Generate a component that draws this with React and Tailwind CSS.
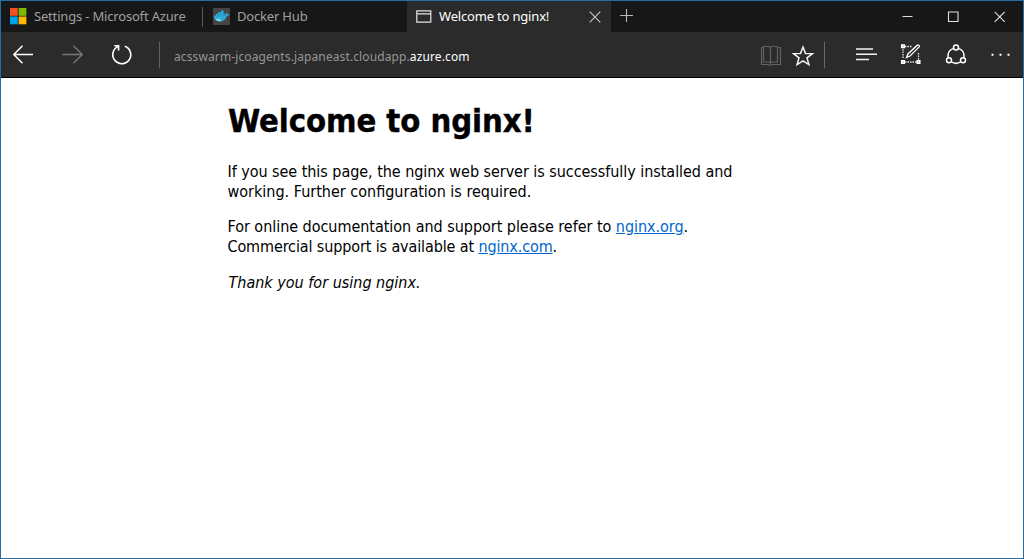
import React from "react";

function WindowsLogo() {
  return (
    <svg width="17" height="17" viewBox="0 0 17 17" className="shrink-0">
      <path fill="#f35022" d="M0 0h7.8v7.8H0z" />
      <path fill="#7eb900" d="M8.6 0h7.8v7.8H8.6z" />
      <path fill="#00a3ee" d="M0 8.5h7.8v7.8H0z" />
      <path fill="#ffb800" d="M8.6 8.5h7.8v7.8H8.6z" />
    </svg>
  );
}

function DockerLogo() {
  return (
    <svg width="17" height="17" viewBox="0 0 17 17" className="shrink-0">
      <path fill="#454545" d="M0 0h17v17H0z" />
      <path fill="#2ba9d8" d="M1 7.5h2V5.800h2V4.200h3V2.500h2.600v3.300h1.200v1.700c1-.1 1.200-.5.9-1.700-.1-.8.2-1.200.6-1.300.7.4 1 .9 1.100 1.500.7-.2 1.300 0 1.800.4-.4 1-1.300 1.400-2.300 1.400-.9 3.400-3 5.500-6.600 5.700C3.300 13.500 1 11.500 1 7.500z" />
      <path stroke="#2492bd" strokeWidth=".4" d="M3 7.500h9M5 5.800h6" />
      <path fill="#8fd0e6" d="M2 10.500c2 .7 4 .5 5 0 .2 1 .8 2 1.500 2.700C5 13.500 3 12.500 2 10.500z" />
    </svg>
  );
}

function TabBar() {
  return (
    <div className="flex h-[31px] items-center bg-[#171717] text-[13px] tracking-[-0.18px] text-[#a0a0a0]">
      <div className="flex h-full w-[201px] items-center pl-[9px]">
        <WindowsLogo />
        <span className="ml-[7px]">Settings - Microsoft Azure</span>
      </div>
      <div className="h-5 w-px bg-[#585858]" />
      <div className="flex h-full w-[204px] items-center pl-[10px]">
        <DockerLogo />
        <span className="ml-[7px]">Docker Hub</span>
      </div>
      <div className="flex h-full w-[204px] items-center bg-[#2b2b2b] pl-[9px] text-white">
        <svg width="16" height="13" viewBox="0 0 16 13" fill="none" stroke="#e6e6e6" strokeWidth="1.200">
          <path d="M.8.8h14v11.400H.8zM.8 3.800h14" />
        </svg>
        <span className="ml-[7px] w-[150px]">Welcome to nginx!</span>
        <svg width="12" height="12" viewBox="0 0 12 12" fill="none" stroke="#c8c8c8" strokeWidth="1.100">
          <path d="M.7.7l10.600 10.600M11.300.7L.7 11.300" />
        </svg>
      </div>
      <svg width="14" height="14" viewBox="0 0 14 14" fill="none" stroke="#b8b8b8" strokeWidth="1.100" className="mb-px ml-[9px]">
        <path d="M6.500 0v13M0 6.500h13" />
      </svg>
      <div className="ml-auto flex h-full items-center pr-[17px]">
        <svg width="104" height="12" viewBox="0 0 104 12" fill="none" stroke="#e0e0e0" strokeWidth="1.100">
          <path d="M.5 5.500h10M46.500 1h9.500v9.500h-9.500zM92.700.9l10 10M102.700.9l-10 10" />
        </svg>
      </div>
    </div>
  );
}

function Toolbar() {
  return (
    <div className="flex h-[46px] items-center border-b border-black bg-[#2b2b2b]">
      <svg width="160" height="45" viewBox="1 0 160 45" fill="none" className="shrink-0">
        <path stroke="#fff" strokeWidth="1.500" d="M33 22.500H14M22.500 13.800l-8.700 8.700 8.700 8.700" />
        <path stroke="#777" strokeWidth="1.400" d="M62.500 22.500H82M73.500 13.800l8.700 8.700-8.700 8.700" />
        <path stroke="#fff" strokeWidth="1.600" d="M124.800 14.200a9 9 0 1 1-7 .4M114.300 13.800h4.300v4.700" />
        <path stroke="#606060" d="M159.500 9.500v27" />
      </svg>
      <div className="mt-[5px] ml-[13px] whitespace-nowrap text-[12px] tracking-[0.11px] text-[#969696]">
        <span>acsswarm-jcoagents.japaneast.cloudapp.</span>
        <span className="text-white">azure.com</span>
      </div>
      <svg width="264" height="45" viewBox="759 0 264 45" fill="none" className="ml-auto shrink-0">
        <path stroke="#626262" strokeWidth="1.200" d="M762.500 15.500h-1v17h7.500l1.500 1 1.500-1h8.500v-17h-2M763.500 14.500h5.500l1.500 1 1.500-1h5.500v15.500h-5.500l-1.500 1-1.500-1h-5.500zM770.500 15.500v16" />
        <path stroke="#f4f4f4" strokeWidth="1.500" d="M803 15l2.500 6.400 7 .2-5.500 4.300 1.900 6.700-5.900-3.800-5.900 3.800 1.900-6.700-5.500-4.300 7-.2z" />
        <path stroke="#686868" d="M824.500 9.500v27" />
        <path stroke="#f4f4f4" strokeWidth="1.500" d="M856 17h17M856 22.300h21M856 27.500h13" />
        <path stroke="#e8e8e8" strokeWidth="1.300" strokeDasharray="1.500 1" d="M905 14.500h7M903 17v10M905 30h12M918.500 21v7" />
        <path stroke="#fff" strokeWidth="1.500" fill="#999" d="M901.700 13h2.600v2.600h-2.600zM901.700 28.700h2.600v2.600h-2.600zM917.200 28.700h2.600v2.600h-2.600z" />
        <path stroke="#fff" strokeWidth="1.300" d="M917.300 13.200q2-.6 2.200 1.400L910 24l-3.500 1.500 1.400-3.500z" />
        <g stroke="#fff" strokeWidth="1.500">
          <circle cx="956" cy="15.500" r="2.500" />
          <circle cx="949" cy="28.200" r="2.500" />
          <circle cx="963" cy="28.200" r="2.500" />
          <path d="M953.500 16.400c-4 1.300-6 5-5.500 9.200M958.500 16.400c4 1.300 6 5 5.500 9.200M951 29.700c3 2 7 2 10 0" />
        </g>
        <path fill="#fff" d="M991.500 21.700h2v2h-2zM999.500 21.700h2v2h-2zM1007.500 21.700h2v2h-2z" />
      </svg>
    </div>
  );
}

function WelcomePage() {
  return (
    <main className="flex-1 bg-white pl-[226.5px] text-[16px] leading-[19.5px] whitespace-nowrap text-black [font-family:'DejaVu_Sans_Condensed','DejaVu_Sans',sans-serif] [font-stretch:condensed]">
      <h1 className="mt-[23px] pl-[0.5px] text-[32.5px] leading-[40px] font-bold tracking-[-0.06px] [-webkit-text-stroke:0.4px_black]">Welcome to nginx!</h1>
      <p className="mt-[21px]">
        <span className="tracking-[-0.045px]">If you see this page, the nginx web server is successfully installed and</span>
        <br />
        <span>working. Further configuration is required.</span>
      </p>
      <p className="mt-[16px]">
        <span className="tracking-[-0.035px]">For online documentation and support please refer to <a className="text-[#0066cc] underline">nginx.org</a>.</span>
        <br />
        <span className="tracking-[-0.12px]">Commercial support is available at <a className="text-[#0066cc] underline">nginx.com</a>.</span>
      </p>
      <p className="mt-[17px] pl-px italic">Thank you for using nginx.</p>
    </main>
  );
}

export default function App() {
  return (
    <div className="flex h-[559px] w-[1024px] flex-col overflow-hidden border border-[#246da5] [font-family:'Noto_Sans','Open_Sans',sans-serif]">
      <TabBar />
      <Toolbar />
      <WelcomePage />
    </div>
  );
}
